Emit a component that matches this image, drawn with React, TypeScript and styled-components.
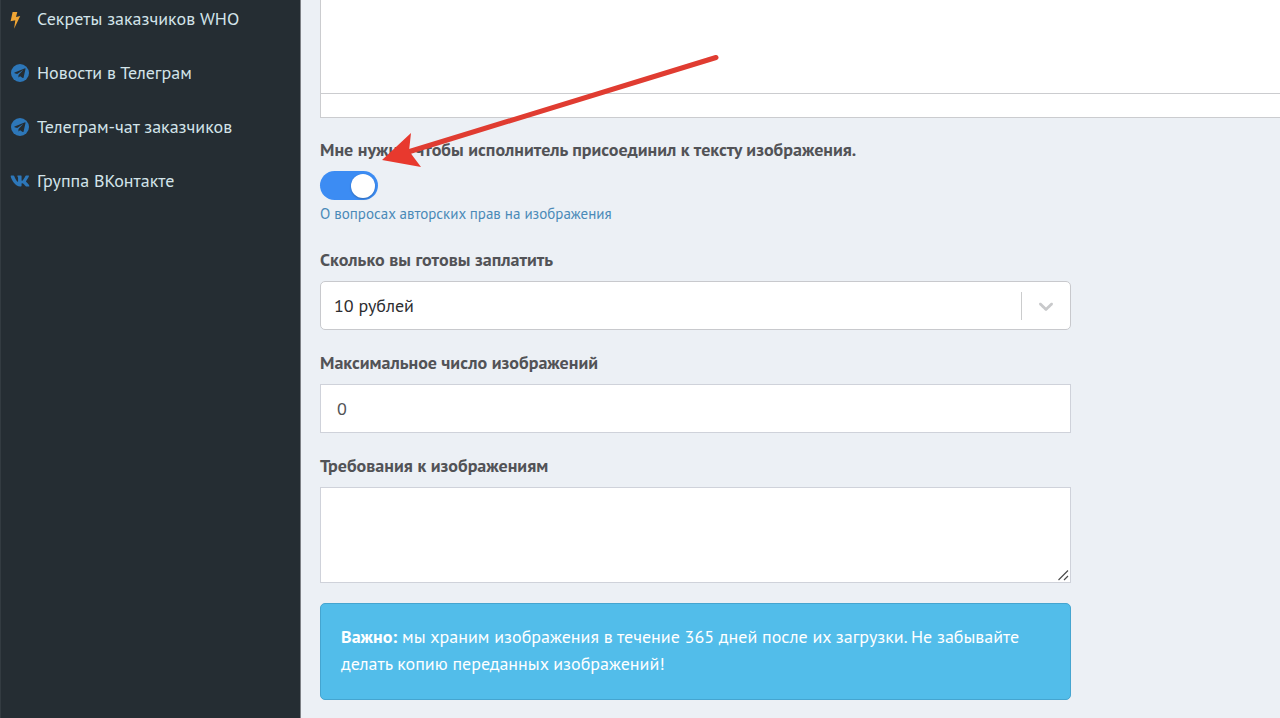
import React, { useState } from "react";
import styled, { createGlobalStyle } from "styled-components";

const GlobalStyle = createGlobalStyle`
  *, *::before, *::after { box-sizing: border-box; }
  body {
    margin: 0;
    background: #ecf0f5;
    color: #525357;
    font-family: "PT Sans", "Noto Sans", sans-serif;
    font-size: 18px;
    line-height: 26px;
  }
`;

const Page = styled.div`
  display: flex;
  min-height: 100vh;
`;

const Sidebar = styled.nav`
  flex: 0 0 301px;
  padding: 6px 10px 6px 9px;
  background: #252d33;
  border-left: 1px solid #333b41;
  border-right: 1px solid #7d8085;
`;

const Menu = styled.ul`
  display: flex;
  flex-direction: column;
  gap: 28px;
  margin: 0;
  padding: 0;
  list-style: none;
`;

const MenuLink = styled.a`
  display: flex;
  align-items: center;
  gap: 7px;
  color: #d3e4ea;
  text-decoration: none;
  white-space: nowrap;
`;

const MenuIcon = styled.svg`
  flex: none;
  width: 20px;
  height: 20px;
`;

const Main = styled.main`
  position: relative;
  flex: 1;
  min-width: 0;
  padding: 0 0 19px 19px;
`;

const Editor = styled.div`
  background: #fff;
  border: solid #cbcccf;
  border-width: 0 0 1px 1px;
`;

const EditorText = styled.textarea`
  display: block;
  width: 100%;
  height: 93px;
  padding: 12px;
  border: 0;
  outline: 0;
  resize: none;
  font: inherit;
  color: inherit;
`;

const EditorStatus = styled.div`
  height: 24px;
  border-top: 1px solid #cbcccf;
`;

const Form = styled.form`
  display: flex;
  flex-direction: column;
  gap: 20px;
  max-width: 751px;
  padding-top: 19px;
`;

const Field = styled.div`
  display: flex;
  flex-direction: column;
  align-items: flex-start;
  gap: 8px;
`;

const Label = styled.label`
  font-weight: 700;
`;

const SwitchGroup = styled.div`
  display: flex;
  flex-direction: column;
  align-items: flex-start;
  gap: 1px;
`;

const Switch = styled.input`
  appearance: none;
  display: flex;
  align-items: center;
  width: 58px;
  height: 29px;
  margin: 0;
  padding: 0 3px;
  border-radius: 15px;
  background: #b8bcc2;
  cursor: pointer;

  &::before {
    content: "";
    width: 24px;
    height: 24px;
    border-radius: 50%;
    background: #fff;
    box-shadow: 0 1px 2px rgba(0, 0, 0, 0.25);
  }

  &:checked {
    justify-content: flex-end;
    background: #3c8cf3;
  }
`;

const HelpLink = styled.a`
  color: #4a8ab8;
  font-size: 15px;
  text-decoration: none;
`;

const SelectBox = styled.div`
  display: grid;
  grid-template-columns: 1fr 49px;
  align-items: center;
  width: 100%;
  background: #fff;
  border: 1px solid #c8c9cd;
  border-radius: 5px;
`;

const Select = styled.select`
  grid-area: 1 / 1 / 2 / 3;
  appearance: none;
  width: 100%;
  height: 47px;
  padding: 0 60px 0 13px;
  border: 0;
  outline: 0;
  background: transparent;
  color: #2d2d30;
  font: inherit;
`;

const Indicator = styled.span`
  grid-area: 1 / 2;
  display: flex;
  align-items: center;
  justify-content: center;
  height: 28px;
  border-left: 1px solid #cbcccd;
  color: #c8c9cb;
  pointer-events: none;
`;

const Input = styled.input`
  width: 100%;
  height: 49px;
  padding: 0 16px;
  border: 1px solid #cfd2da;
  outline: 0;
  background: #fff;
  color: #525357;
  font: inherit;
`;

const TextAreaBox = styled.div`
  display: grid;
  width: 100%;
`;

const TextArea = styled.textarea`
  grid-area: 1 / 1;
  width: 100%;
  height: 96px;
  padding: 10px 16px;
  border: 1px solid #cfd2da;
  outline: 0;
  background: #fff;
  color: #525357;
  font: inherit;
  resize: vertical;
`;

const Grip = styled.svg`
  grid-area: 1 / 1;
  place-self: end;
  width: 14px;
  height: 14px;
  margin: 1px;
  background: #fff;
  pointer-events: none;
`;

const Notice = styled.p`
  margin: 0;
  padding: 19px 20px 22px;
  border: 1px solid #45a5d0;
  border-radius: 5px;
  background: #52bdea;
  color: #fff;
  line-height: 27px;
`;

const Arrow = styled.svg`
  position: absolute;
  top: 50px;
  left: 79px;
  width: 345px;
  height: 125px;
  pointer-events: none;
`;

const BoltIcon = () => (
  <MenuIcon viewBox="0 0 20 20" aria-hidden="true">
    <path
      fill="#f0a534"
      d="M2.600 3h4.700L6 7.900l4.200-.8L4.100 19.700 5.300 11.300 .6 12.300z"
    />
  </MenuIcon>
);

const TelegramIcon = () => (
  <MenuIcon viewBox="0 0 20 20" aria-hidden="true">
    <circle cx="10" cy="10" r="9" fill="#2d77b9" />
    <path
      fill="#252d33"
      d="M15.100 5.300 4.600 9.500c-.5.2-.5.5 0 .7l2.600.8 6.200-4.200-4.900 5.100-.1 2.700 1.700-1.400 2.600 1.800c.4.2.8.1.9-.4l1.900-8.500c.1-.6-.1-.9-.4-.8z"
    />
  </MenuIcon>
);

const VkIcon = () => (
  <MenuIcon viewBox="0 0 576 512" aria-hidden="true">
    <path
      fill="#2d77b9"
      d="M545 117.700c3.700-12.500 0-21.700-17.800-21.700h-58.900c-15 0-21.900 7.900-25.600 16.700 0 0-30 73.100-72.400 120.500-13.700 13.700-20 18.100-27.500 18.100-3.700 0-9.400-4.400-9.400-16.900V117.700c0-15-4.200-21.700-16.600-21.700h-92.600c-9.400 0-15 7-15 13.500 0 14.200 21.200 17.500 23.400 57.500v86.800c0 19-3.400 22.500-10.900 22.500-20 0-68.600-73.400-97.400-157.400-5.800-16.300-11.500-22.900-26.600-22.900H38.800c-16.800 0-20.200 7.900-20.200 16.700 0 15.600 20 93.100 93.100 195.500C160.400 378.100 229 416 291.400 416c37.500 0 42.100-8.400 42.100-22.900 0-66.800-3.400-73.100 15.400-73.100 8.700 0 23.700 4.400 58.700 38.100 40 40 46.600 57.900 69 57.900h58.900c16.800 0 25.300-8.400 20.400-25-11.200-34.900-86.900-106.700-90.300-111.500-8.700-11.200-6.200-16.200 0-26.200.1-.1 72-101.300 79.400-135.600z"
    />
  </MenuIcon>
);

const menu = [
  { text: "Секреты заказчиков WHO", Icon: BoltIcon },
  { text: "Новости в Телеграм", Icon: TelegramIcon },
  { text: "Телеграм-чат заказчиков", Icon: TelegramIcon },
  { text: "Группа ВКонтакте", Icon: VkIcon },
];

export default function App() {
  const [withImages, setWithImages] = useState(true);
  const [count, setCount] = useState("0");

  return (
    <>
      <GlobalStyle />
      <Page>
        <Sidebar>
          <Menu>
            {menu.map(({ text, Icon }) => (
              <li key={text}>
                <MenuLink href="#">
                  <Icon />
                  {text}
                </MenuLink>
              </li>
            ))}
          </Menu>
        </Sidebar>
        <Main>
          <Editor>
            <EditorText aria-label="Текст задания" />
            <EditorStatus />
          </Editor>
          <Form>
            <Field>
              <Label htmlFor="images">
                Мне нужно, чтобы исполнитель присоединил к тексту изображения.
              </Label>
              <SwitchGroup>
                <Switch
                  id="images"
                  type="checkbox"
                  checked={withImages}
                  onChange={(e) => setWithImages(e.target.checked)}
                />
                <HelpLink href="#">О вопросах авторских прав на изображения</HelpLink>
              </SwitchGroup>
            </Field>
            <Field>
              <Label htmlFor="price">Сколько вы готовы заплатить</Label>
              <SelectBox>
                <Select id="price">
                  <option>10 рублей</option>
                </Select>
                <Indicator>
                  <svg width="24" height="24" viewBox="0 0 20 20" aria-hidden="true">
                    <path
                      fill="currentColor"
                      d="M4.516 7.548c.436-.446 1.043-.481 1.576 0L10 11.295l3.908-3.747c.533-.481 1.141-.446 1.574 0 .436.445.408 1.197 0 1.615-.406.418-4.695 4.502-4.695 4.502a1.095 1.095 0 0 1-1.576 0S4.924 9.581 4.516 9.163s-.436-1.170 0-1.615z"
                    />
                  </svg>
                </Indicator>
              </SelectBox>
            </Field>
            <Field>
              <Label htmlFor="count">Максимальное число изображений</Label>
              <Input id="count" value={count} onChange={(e) => setCount(e.target.value)} />
            </Field>
            <Field>
              <Label htmlFor="requirements">Требования к изображениям</Label>
              <TextAreaBox>
                <TextArea id="requirements" />
                <Grip viewBox="0 0 14 14" aria-hidden="true">
                  <path d="M2.500 12 12 2.500M8 12l4-4" stroke="#4c4c4c" strokeWidth="1.200" />
                </Grip>
              </TextAreaBox>
            </Field>
            <Notice>
              <strong>Важно:</strong> мы храним изображения в течение 365 дней после их
              загрузки. Не забывайте делать копию переданных изображений!
            </Notice>
          </Form>
          <Arrow viewBox="380 50 345 125" aria-hidden="true">
            <path d="M716 57.500 408 152" stroke="#e03c31" strokeWidth="5" strokeLinecap="round" />
            <path d="M382 160 411 133 409 151 421 167z" fill="#e8392e" />
          </Arrow>
        </Main>
      </Page>
    </>
  );
}
